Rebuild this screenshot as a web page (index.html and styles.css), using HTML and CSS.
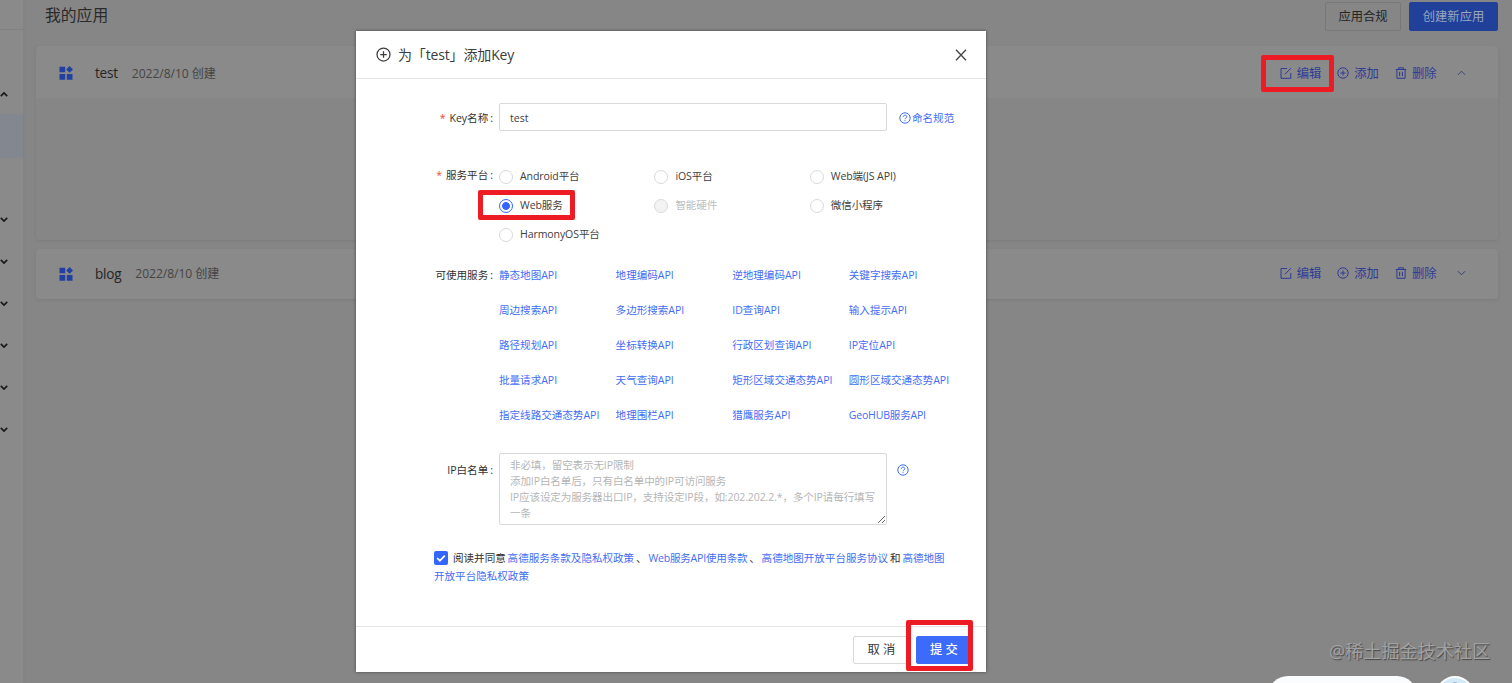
FILE: index.html
```html
<!DOCTYPE html>
<html lang="zh-CN">
<head>
<meta charset="utf-8">
<title>我的应用</title>
<link rel="stylesheet" href="styles.css">
</head>
<body>
<svg class="defs" width="0" height="0" aria-hidden="true">
  <symbol id="i-up" viewBox="0 0 10 6"><path d="M1 5 5 1l4 4"/></symbol>
  <symbol id="i-down" viewBox="0 0 10 6"><path d="m1 1 4 4 4-4"/></symbol>
  <symbol id="i-edit" viewBox="0 0 12 12"><path d="M7 1.5H1v9.8h9.8V6M4.8 7.4 10.9 1.2"/></symbol>
  <symbol id="i-plus" viewBox="0 0 12 12"><circle cx="6" cy="6" r="5.2"/><path d="M6 3.4v5.2M3.4 6h5.2"/></symbol>
  <symbol id="i-trash" viewBox="0 0 12 12"><path d="M.8 2.5h10.4M3.6 2.3V.8h4.8v1.5M1.9 2.7v8.6h8.2V2.7M4.6 4.8v4.4M7.4 4.8v4.4"/></symbol>
  <symbol id="i-help" viewBox="0 0 12 12"><circle cx="6" cy="6" r="5.2"/><path d="M4.3 4.8c0-2.2 3.5-2.2 3.5 0C7.8 6 6 5.9 6 7.2M6 8.2v1"/></symbol>
  <symbol id="i-app" viewBox="0 0 14 14"><path d="M.5.8h5.7v5.4H.5zM.5 8h5.7v5.7H.5zM7.8 8h5.7v5.7H7.8zM10.6 0 14 3.4 10.6 6.8 7.2 3.4z"/></symbol>
</svg>
<div class="page">
  <nav class="side">
    <div class="side-top"></div>
    <div class="side-item open"><svg><use href="#i-up"/></svg></div>
    <div class="side-active"></div>
    <div class="side-rest">
      <div class="side-item"><svg><use href="#i-down"/></svg></div>
      <div class="side-item"><svg><use href="#i-down"/></svg></div>
      <div class="side-item"><svg><use href="#i-down"/></svg></div>
      <div class="side-item"><svg><use href="#i-down"/></svg></div>
      <div class="side-item"><svg><use href="#i-down"/></svg></div>
      <div class="side-item"><svg><use href="#i-down"/></svg></div>
    </div>
  </nav>
  <main class="main">
    <header class="head">
      <h1>我的应用</h1>
      <div class="head-btns"><span class="hbtn">应用合规</span><span class="hbtn blue">创建新应用</span></div>
    </header>
    <section class="card tall">
      <div class="card-head">
        <svg class="app"><use href="#i-app"/></svg><b>test</b><time>2022/8/10 创建</time>
        <div class="acts">
          <a><svg><use href="#i-edit"/></svg>编辑</a><a><svg><use href="#i-plus"/></svg>添加</a><a><svg><use href="#i-trash"/></svg>删除</a><svg class="chev"><use href="#i-up"/></svg>
        </div>
      </div>
    </section>
    <section class="card">
      <div class="card-head">
        <svg class="app"><use href="#i-app"/></svg><b>blog</b><time>2022/8/10 创建</time>
        <div class="acts">
          <a><svg><use href="#i-edit"/></svg>编辑</a><a><svg><use href="#i-plus"/></svg>添加</a><a><svg><use href="#i-trash"/></svg>删除</a><svg class="chev"><use href="#i-down"/></svg>
        </div>
      </div>
    </section>
  </main>
</div>

<div class="modal">
  <header class="m-head">
    <svg class="m-plus"><use href="#i-plus"/></svg><h2>为「test」添加Key</h2>
    <svg class="close" viewBox="0 0 12 12"><path d="m1 .8 10 10.4M11 .8 1 11.2"/></svg>
  </header>
  <div class="m-body">
    <div class="row name-row">
      <label><i>*</i>Key名称<s>:</s></label>
      <input class="name" value="test">
      <a class="help"><svg><use href="#i-help"/></svg>命名规范</a>
    </div>
    <div class="row plat-row">
      <label><i>*</i>服务平台<s>:</s></label>
      <div class="radios">
        <span><em></em>Android平台</span><span><em></em>iOS平台</span><span><em></em>Web端(JS API)</span>
        <span><em class="on"></em>Web服务</span><span class="off"><em></em>智能硬件</span><span><em></em>微信小程序</span>
        <span><em></em>HarmonyOS平台</span>
      </div>
    </div>
    <div class="row svc-row">
      <label>可使用服务<s>:</s></label>
      <div class="svcs">
        <a>静态地图API</a><a>地理编码API</a><a>逆地理编码API</a><a>关键字搜索API</a>
        <a>周边搜索API</a><a>多边形搜索API</a><a>ID查询API</a><a>输入提示API</a>
        <a>路径规划API</a><a>坐标转换API</a><a>行政区划查询API</a><a>IP定位API</a>
        <a>批量请求API</a><a>天气查询API</a><a>矩形区域交通态势API</a><a>圆形区域交通态势API</a>
        <a>指定线路交通态势API</a><a>地理围栏API</a><a>猎鹰服务API</a><a class="tight">GeoHUB服务API</a>
      </div>
    </div>
    <div class="row ip-row">
      <label>IP白名单<s>:</s></label>
      <textarea class="ips" placeholder="非必填，留空表示无IP限制&#10;添加IP白名单后，只有白名单中的IP可访问服务&#10;IP应该设定为服务器出口IP，支持设定IP段，如:202.202.2.*，多个IP请每行填写一条"></textarea>
      <a class="help"><svg><use href="#i-help"/></svg></a>
    </div>
    <p class="agree"><svg class="check" viewBox="0 0 14 14"><path d="m3.2 7 2.7 2.8 4.9-5.2"/></svg>阅读并同意 <a>高德服务条款及隐私权政策</a> 、 <a class="tight">Web服务API使用条款</a> 、 <a>高德地图开放平台服务协议</a> 和 <a>高德地图<br>开放平台隐私权政策</a></p>
  </div>
  <footer class="m-foot"><button class="btn">取 消</button><button class="btn primary">提 交</button></footer>
</div>

<div class="mark mark-edit"></div>
<div class="mark mark-web"></div>
<div class="mark mark-submit"></div>
<div class="watermark">@稀土掘金技术社区</div>
<div class="float-pill"></div>
<div class="float-dot"><i></i></div>
</body>
</html>
```
FILE: styles.css
```css
* { box-sizing: border-box; }
body {
  margin: 0; height: 683px; overflow: hidden; position: relative; background: #868686;
  font-family: "Open Sans", "Noto Sans CJK SC", sans-serif; font-size: 10.55px; color: #404040;
}
svg { fill: none; stroke: currentColor; flex: none; }
.defs { position: absolute; }
h1, h2, p { margin: 0; font-weight: 400; }

.page { display: flex; height: 683px; }
.side { width: 23px; margin-right: 1px; background: #8a8a8a; box-shadow: 1px 0 3px #828282; color: #171717; }
.side-top { height: 30px; border-bottom: 1px solid #808080; }
.side-item { height: 42px; display: flex; align-items: center; }
.side-item svg { width: 8px; height: 5px; stroke-width: 2; }
.side-item.open { height: 84px; padding-top: 44px; }
.side-active { height: 44px; background: #838890; }
.side-rest { padding-top: 40px; }

.main { flex: 1; padding: 0 14px 0 12px; }
.head { height: 46px; display: flex; justify-content: space-between; padding-left: 9px; }
.head h1 { font-size: 15.8px; line-height: 31px; color: #2b2b2b; }
.head-btns { display: flex; gap: 8px; padding-top: 2px; }
.hbtn { height: 29px; width: 76px; border: 1px solid #787878; border-radius: 2px; font-size: 12.3px; line-height: 28px; text-align: center; color: #242424; }
.hbtn.blue { width: 89px; background: #20409a; border-color: #20409a; color: #9ba6bd; }
.card { background: #8a8a8a; border-radius: 4px; box-shadow: 0 1px 3px #7b7b7b; height: 50px; overflow: hidden; }
.card.tall { height: 194px; background: #868686; margin-bottom: 9px; }
.card-head { height: 49px; display: flex; align-items: center; padding-left: 22.5px; background: #8a8a8a; }
.tall .card-head { height: 52px; padding-top: 2px; }
.app { width: 14px; height: 14px; fill: #2340a0; stroke: none; margin-right: 22.5px; }
.card b { font-weight: 400; font-size: 13.6px; letter-spacing: -.25px; color: #252525; margin-right: 14px; }
.card time { font-size: 12.1px; letter-spacing: -.05px; color: #444; }
.card b, .card time, .acts { margin-top: -1px; }
.acts { margin-left: auto; display: flex; align-items: center; font-size: 12.3px; padding-right: 32.5px; }
.acts a { display: flex; align-items: center; gap: 5px; margin-right: 16px; color: #2e3a96; }
.acts a svg { width: 12px; height: 12px; }
.acts .chev { width: 9px; height: 6px; margin-left: 4px; color: #2d3b70; }

.modal {
  position: absolute; left: 356px; top: 31px; width: 630px; height: 641px; background: #fff;
  box-shadow: 0 0 3px rgba(0,0,0,.5); display: flex; flex-direction: column;
}
.m-head { height: 48px; border-bottom: 1px solid #e4e4e4; display: flex; align-items: center; padding: 0 19px 0 20px; color: #3c3c3c; }
.m-head h2 { font-size: 14px; letter-spacing: -.15px; white-space: nowrap; margin-top: -2px; }
.m-plus { width: 15px; height: 15px; margin-right: 7px; }
.close { width: 12px; height: 12px; margin-left: auto; color: #444; stroke-width: 1.3; }
.m-body { flex: 1; padding-top: 25px; }
.row { display: flex; }
.row label { width: 137px; margin-right: 6px; text-align: right; white-space: nowrap; color: #303030; }
label s { text-decoration: none; margin-left: 2px; }
label i { color: #f5483b; font-style: normal; margin-right: 4px; }
a { color: #3f6df6; }
.tight { letter-spacing: -.2px; }
.name-row { height: 27px; align-items: center; }
.name { width: 388px; height: 28px; margin-top: -1px; border: 1px solid #d9d9d9; border-radius: 2px; padding: 1px 10px 0; font: inherit; color: #404040; outline: 0; }
.help { display: flex; align-items: center; gap: 1px; margin-left: 12px; }
.help svg { width: 12px; height: 12px; }
.plat-row { margin-top: 31px; height: 87px; line-height: 31px; }
.plat-row label { line-height: 26px; }
.radios { display: grid; grid-template-columns: repeat(3, 155.4px); grid-auto-rows: 29px; letter-spacing: -.1px; }
.radios span { display: flex; align-items: center; gap: 7px; }
.radios em { width: 14px; height: 14px; border: 1px solid #d9d9d9; border-radius: 50%; }
.radios .on { border-color: #3366ff; background: radial-gradient(circle, #3366ff 3.5px, #fff 4.3px); }
.off { color: #bdbdbd; }
.off em { background: #f3f3f3; }
.svc-row { margin-top: 8px; height: 175px; line-height: 36px; }
.svcs { display: grid; grid-template-columns: repeat(4, 116.6px); grid-auto-rows: 35px; white-space: nowrap; }
.ip-row { margin-top: 21px; height: 72px; line-height: 35px; }
.ips { width: 388px; height: 72px; border: 1px solid #d9d9d9; border-radius: 2px; padding: 3px 4px 3px 10px; font: inherit; line-height: 16px; letter-spacing: -.12px; overflow: hidden; resize: vertical; outline: 0; }
.ips::placeholder { color: #b5b5b5; opacity: 1; }
.ip-row .help { height: 34px; margin-left: 10px; }
.agree { margin: 24px 0 0 78px; line-height: 18px; white-space: nowrap; word-spacing: -.9px; color: #303030; }
.check { width: 14px; height: 14px; background: #3366ff; border-radius: 2px; color: #fff; stroke-width: 1.8; vertical-align: -3px; margin-right: 5px; }
.m-foot { height: 46px; border-top: 1px solid #e4e4e4; display: flex; justify-content: flex-end; padding: 9px 16px 0 0; gap: 7px; }
.btn { width: 56px; height: 28px; border: 1px solid #d9d9d9; border-radius: 2px; background: #fff; font: 12.3px "Open Sans", "Noto Sans CJK SC", sans-serif; padding: 0 0 2px 1px; color: #383838; }
.btn.primary { width: 54px; background: #3b6bf8; border-color: #3b6bf8; color: #fff; font-weight: 500; padding-left: 2px; }

.mark { position: absolute; border: 5px solid #ed1c24; border-radius: 2px; }
.mark-edit { left: 1261px; top: 55px; width: 73px; height: 37px; }
.mark-web { left: 478px; top: 190px; width: 97px; height: 30px; }
.mark-submit { left: 906px; top: 620px; width: 67px; height: 51px; }
.watermark { position: absolute; left: 1329px; top: 637px; font-size: 18.1px; line-height: 28px; white-space: nowrap; color: #a2a2a2; text-shadow: 1px 1px 1px #484848; }
.float-pill { position: absolute; left: 1268px; top: 676px; width: 149px; height: 40px; border-radius: 20px; background: #fbfcfe; }
.float-dot { position: absolute; left: 1436px; top: 676px; width: 38px; height: 38px; border-radius: 50%; border: 2px solid #fff; background: #d3ebf8; }
.float-dot i { position: absolute; left: 14px; top: 4px; width: 6px; height: 8px; border-radius: 3px; background: #9fb6ca; }
```
